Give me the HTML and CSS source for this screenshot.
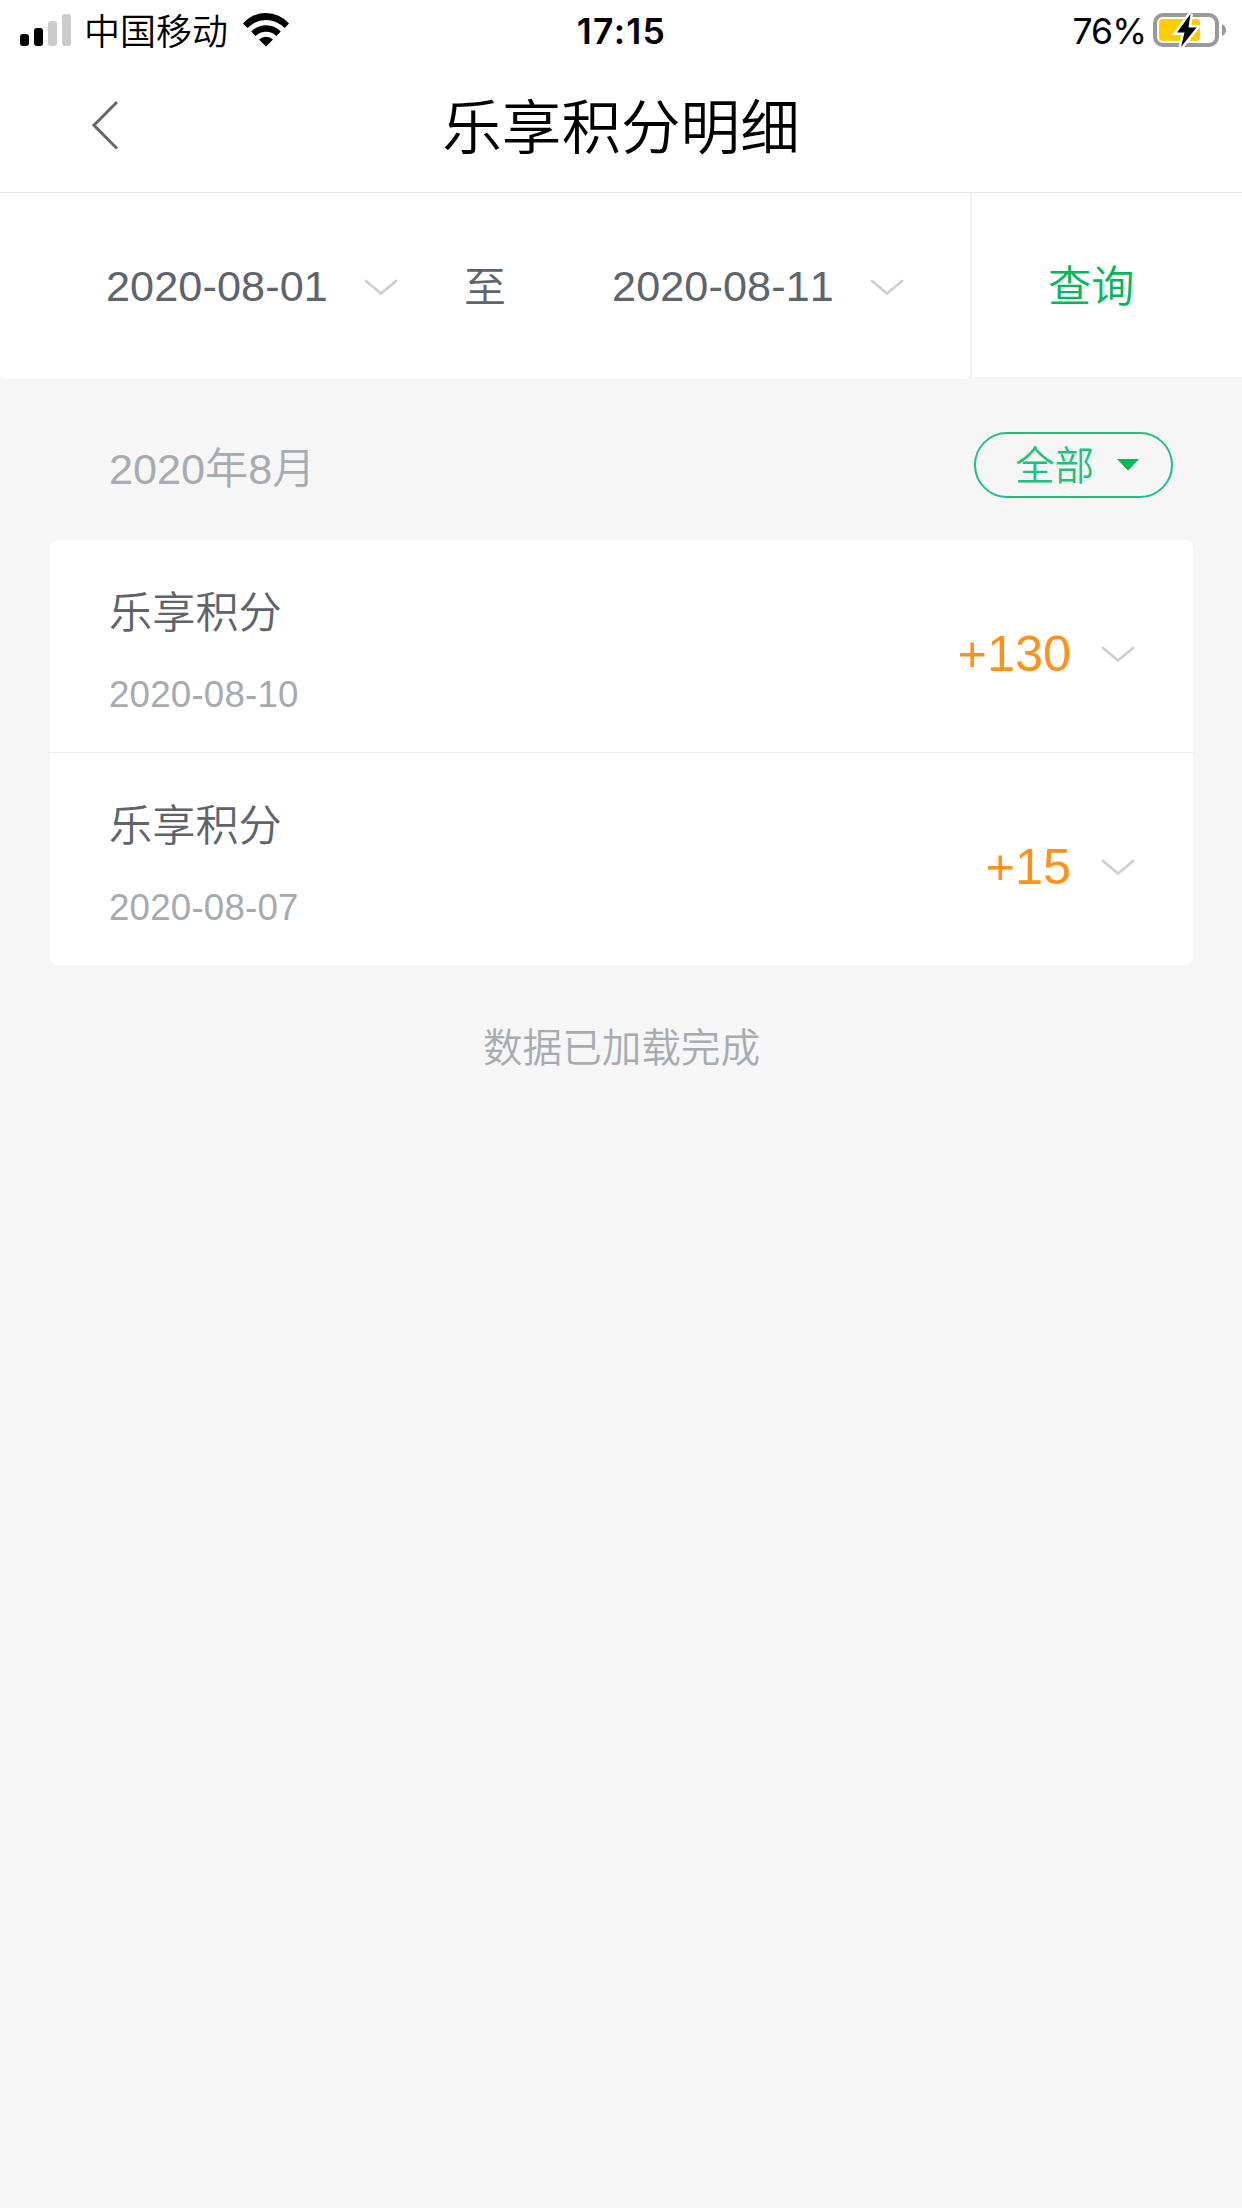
FILE: index.html
```
<!DOCTYPE html>
<html lang="zh-CN">
<head>
<meta charset="utf-8">
<title>乐享积分明细</title>
<link rel="stylesheet" href="styles.css">
</head>
<body>
<header class="top">
  <div class="status">
    <div class="status-left">
      <svg class="signal" width="52" height="32" viewBox="0 0 52 32">
        <rect x="0" y="20" width="9" height="12" rx="3"/>
        <rect x="14" y="14" width="9" height="18" rx="3"/>
        <rect class="weak" x="28" y="7" width="9" height="25" rx="3"/>
        <rect class="weak" x="42" y="0" width="9" height="32" rx="3"/>
      </svg>
      <span class="carrier">中国移动</span>
      <svg class="wifi" width="46" height="34" viewBox="0 0 46 34">
        <path d="M0 10.5Q9.500 0 23 0Q36.500 0 46 10.500L41.500 15Q33.500 7 23 7Q12.500 7 4.500 15Z"/>
        <path d="M8.200 18.500Q14.500 12.300 23 12.300Q31.500 12.300 37.800 18.500L33.300 23Q28.800 18.800 23 18.800Q17.200 18.800 12.700 23Z"/>
        <path d="M16 26.500Q19 23.700 23 23.700Q27 23.700 30 26.500L23 33.500Z"/>
      </svg>
    </div>
    <span class="time">17:15</span>
    <div class="status-right">
      <span class="percent">76%</span>
      <svg class="battery" width="74" height="36" viewBox="0 0 74 36">
        <rect x="2" y="2" width="62" height="30" rx="8" fill="none" stroke="#999" stroke-width="4"/>
        <rect x="6" y="6" width="41" height="22" rx="4" fill="#fc0"/>
        <path d="M69 11Q73 13 73 17Q73 21 69 23Z" fill="#999"/>
        <path d="M37.500 1L24 19.500H31.500L28 34L43.500 14.500H35.500Z" fill="#000" stroke="#fff" stroke-width="5" paint-order="stroke"/>
      </svg>
    </div>
  </div>
  <nav class="nav">
    <svg class="back" width="28" height="52" viewBox="0 0 28 52"><path d="M27 2L4 25.200L27 48.500"/></svg>
    <h1 class="title">乐享积分明细</h1>
    <span></span>
  </nav>
</header>
<section class="filter">
  <div class="range">
    <span class="date">2020-08-01</span>
    <svg class="chevron" width="34" height="18" viewBox="0 0 34 18"><path d="M2 2L17 14.500L32 2"/></svg>
    <span class="to">至</span>
    <span class="date">2020-08-11</span>
    <svg class="chevron" width="34" height="18" viewBox="0 0 34 18"><path d="M2 2L17 14.500L32 2"/></svg>
  </div>
  <div class="query">查询</div>
</section>
<main class="content">
  <div class="month-bar">
    <span class="month">2020年8月</span>
    <div class="pill"><span>全部</span><svg width="24" height="12" viewBox="0 0 24 12"><path d="M1 0H23L12 11.500Z" fill="#00b858"/></svg></div>
  </div>
  <div class="card">
    <div class="row">
      <div class="info"><div class="name">乐享积分</div><div class="day">2020-08-10</div></div>
      <span class="points">+130</span>
      <svg class="chevron" width="34" height="18" viewBox="0 0 34 18"><path d="M2 2L17 14.500L32 2"/></svg>
    </div>
    <div class="row">
      <div class="info"><div class="name">乐享积分</div><div class="day">2020-08-07</div></div>
      <span class="points">+15</span>
      <svg class="chevron" width="34" height="18" viewBox="0 0 34 18"><path d="M2 2L17 14.500L32 2"/></svg>
    </div>
  </div>
  <p class="done">数据已加载完成</p>
</main>
</body>
</html>
```
FILE: styles.css
```
* { box-sizing: border-box; }
body {
  margin: 0;
  min-height: 2208px;
  background: #f6f6f6;
  color: #5d646b;
  font-family: "Liberation Sans", "Noto Sans CJK SC", sans-serif;
  font-weight: 350;
  font-kerning: none;
}
svg { display: block; flex: none; }
span { white-space: nowrap; }

.top {
  height: 193px;
  background: #fff;
  border-bottom: 1px solid #e6e6e6;
}
.status {
  display: grid;
  grid-template-columns: 1fr auto 1fr;
  height: 60px;
  padding: 0 15px 0 20px;
  color: #000;
}
.status-left, .status-right { display: flex; align-items: flex-start; }
.status-right { justify-content: flex-end; }
.signal { margin-top: 14px; }
.weak { fill: #ccc; }
.carrier {
  margin: 6px 0 0 12px;
  font-size: 36px;
  line-height: 46px;
  font-family: "Noto Sans CJK SC", sans-serif;
}
.wifi { margin: 13px 0 0 15px; }
.time {
  margin: 9px 4px 0 0;
  font: 600 35.500px/45px Inter, sans-serif;
  letter-spacing: 1.300px;
}
.percent {
  margin: 9px 7px 0 0;
  font: 400 35.500px/45px Inter, sans-serif;
  letter-spacing: -1px;
}
.battery { margin-top: 13px; }

.nav {
  display: grid;
  grid-template-columns: 1fr auto 1fr;
  align-items: center;
  height: 132px;
  padding: 0 90px;
}
.back path { fill: none; stroke: #666; stroke-width: 3; }
.title {
  margin: 6px 0 0;
  color: #000;
  font-size: 59.600px;
  font-weight: 350;
  line-height: 80px;
}

.filter { display: flex; align-items: flex-start; height: 186px; }
.range {
  display: flex;
  align-items: center;
  width: 972px;
  height: 186px;
  padding-left: 106px;
  background: #fff;
  border-right: 2px solid #f0f1f2;
  border-radius: 0 0 6px 6px;
  font-size: 43.200px;
}
.range .date { width: 221px; letter-spacing: 0.100px; }
.range .chevron { margin: 4px 0 0 37px; }
.to { margin: 0 106px 6px 66px; font-size: 42px; }
.query {
  flex: 1;
  height: 184px;
  background: #fff;
  color: #00b858;
  font-size: 43.200px;
  line-height: 189px;
  padding-left: 76px;
}
.chevron path {
  fill: none;
  stroke: #cbd0d5;
  stroke-width: 2.800;
  stroke-linecap: round;
}

.content { padding: 0 49px 0 50px; }
.month-bar {
  display: flex;
  justify-content: space-between;
  align-items: flex-start;
  height: 161px;
  padding: 53px 20px 0 59px;
}
.month { color: #a5abb0; font-size: 43.200px; line-height: 66px; margin-top: 4px; }
.pill {
  display: flex;
  align-items: center;
  width: 199px;
  height: 66px;
  padding-left: 39px;
  border: 2px solid #1fc17d;
  border-radius: 33px;
  color: #1fc17d;
  font-size: 39.600px;
  line-height: 62px;
}
.pill span { padding-top: 2px; }
.pill svg { margin-left: 22px; }

.card { background: #fff; border-radius: 8px; }
.row {
  display: flex;
  align-items: center;
  height: 212px;
  padding: 0 58px 0 59px;
}
.row + .row { height: 213px; border-top: 1px solid #ebedee; }
.info { flex: 1; padding-top: 9px; }
.name { font-size: 43.200px; line-height: 60px; }
.day { margin-top: 28px; color: #a5abb0; font-size: 36.700px; line-height: 48px; letter-spacing: 0.200px; }
.points { margin: 15px 30px 0 0; color: #ff9218; font-size: 50.400px; line-height: 60px; }
.row .chevron { margin-top: 17px; }

.done {
  margin: 53px 0 0;
  text-align: center;
  color: #a5abb0;
  font-size: 39.600px;
  line-height: 60px;
}
```
